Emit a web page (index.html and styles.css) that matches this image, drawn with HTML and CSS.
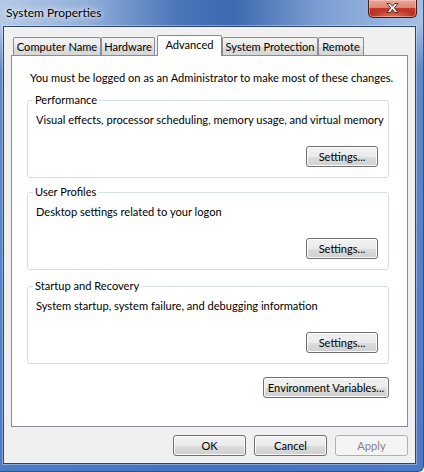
FILE: index.html
```html
<!DOCTYPE html>
<html lang="en">
<head>
<meta charset="utf-8">
<title>System Properties</title>
<link rel="stylesheet" href="styles.css">
</head>
<body>
<div class="window">
  <header class="titlebar">
    <span class="title">System Properties</span>
    <button class="close" aria-label="Close">
      <svg width="15" height="12" viewBox="0 0 15 12" aria-hidden="true">
        <polygon points="2,1.5 5.2,1.5 7.5,4.3 9.8,1.5 13,1.5 9.4,5.8 13,10.5 9.8,10.5 7.5,7.5 5.2,10.5 2,10.5 5.6,5.8" fill="#fff" stroke="#5a2a24" stroke-width="1" stroke-linejoin="round"/>
      </svg>
    </button>
  </header>
  <div class="client">
    <nav class="tabs">
      <span class="tab tab-cn">Computer Name</span>
      <span class="tab tab-hw">Hardware</span>
      <span class="tab tab-adv active">Advanced</span>
      <span class="tab tab-sp">System Protection</span>
      <span class="tab tab-rm">Remote</span>
    </nav>
    <section class="panel">
      <p class="note">You must be logged on as an Administrator to make most of these changes.</p>
      <fieldset class="group group-perf">
        <legend>Performance</legend>
        <p class="desc">Visual effects, processor scheduling, memory usage, and virtual memory</p>
        <div class="row"><button class="btn btn-settings">Settings...</button></div>
      </fieldset>
      <fieldset class="group group-prof">
        <legend>User Profiles</legend>
        <p class="desc">Desktop settings related to your logon</p>
        <div class="row"><button class="btn btn-settings">Settings...</button></div>
      </fieldset>
      <fieldset class="group group-boot">
        <legend>Startup and Recovery</legend>
        <p class="desc">System startup, system failure, and debugging information</p>
        <div class="row"><button class="btn btn-settings">Settings...</button></div>
      </fieldset>
      <div class="row env-row"><button class="btn btn-env">Environment Variables...</button></div>
    </section>
    <footer class="actions">
      <button class="btn btn-action">OK</button>
      <button class="btn btn-action">Cancel</button>
      <button class="btn btn-action" disabled>Apply</button>
    </footer>
  </div>
</div>
</body>
</html>
```
FILE: styles.css
```css
* { box-sizing: border-box; }

html, body {
  margin: 0;
  padding: 0;
}

body {
  width: 424px;
  height: 472px;
  overflow: hidden;
  font-family: Lato, "Liberation Sans", Arial, sans-serif;
  font-size: 11.1px;
  color: #000;
}

/* Aero glass frame */
.window {
  width: 424px;
  height: 472px;
  display: flex;
  flex-direction: column;
  padding: 0 7px 7px 3px;
  border-right: 1px solid #2f5488;
  border-bottom: 1px solid #2f5488;
  border-bottom-right-radius: 6px;
  background:
    linear-gradient(180deg, rgba(80, 126, 198, 0) 0, rgba(80, 126, 198, 0) 24px, rgba(76, 122, 196, 0.8) 70px, rgba(68, 114, 192, 0.9) 100%),
    linear-gradient(90deg, #b4c9e6 0%, #93b0da 20%, #4a76b9 42%, #3c69b0 55%, #7a9dd1 75%, #a6c0e4 100%);
}

.titlebar {
  height: 26px;
  display: flex;
  align-items: flex-start;
  padding-left: 3px;
}

.title {
  line-height: 26px;
  font-size: 12px;
  color: #000;
  text-shadow: 0 0 8px rgba(255, 255, 255, 0.95), 0 0 4px rgba(255, 255, 255, 0.9);
}

.close {
  margin-left: auto;
  margin-right: -1px;
  width: 49px;
  height: 18px;
  padding: 0;
  display: flex;
  align-items: center;
  justify-content: center;
  border: 1px solid #4a1a14;
  border-top: 0;
  border-radius: 0 0 5px 5px;
  background:
    radial-gradient(ellipse 70% 60% at 50% 100%, rgba(255, 140, 110, 0.75), rgba(255, 140, 110, 0) 70%),
    linear-gradient(180deg, #e8a89e 0%, #d98676 45%, #c1392a 50%, #b52a1c 100%);
  box-shadow: inset 0 0 0 1px rgba(255, 220, 210, 0.45);
}

.close svg { display: block; margin-top: -1px; }

.client {
  flex: 1;
  display: flex;
  flex-direction: column;
  border: 1px solid #2a4670;
  background: #f0f0f0;
  box-shadow: 0 0 0 1px rgba(255, 255, 255, 0.35);
}

/* Tab strip */
.tabs {
  margin-top: 8px;
  height: 20px;
  padding-left: 9px;
  display: flex;
  align-items: flex-end;
}

.tab {
  height: 18px;
  line-height: 17px;
  text-align: center;
  white-space: nowrap;
  border: 1px solid #898c95;
  border-bottom: 0;
  border-radius: 2px 2px 0 0;
  background: linear-gradient(180deg, #f2f2f2 0%, #ebebeb 50%, #dedede 51%, #d6d6d6 100%);
}

.tab-cn { width: 88px; }
.tab-hw { width: 54px; }
.tab-adv { width: 65px; }
.tab-sp { width: 96px; }
.tab-rm { width: 46px; }

.tab.active {
  position: relative;
  z-index: 1;
  height: 21px;
  margin-left: 2px;
  margin-bottom: -1px;
  background: #fff;
}

.panel {
  margin: 0 7px;
  height: 372px;
  border: 1px solid #898c95;
  background: #fff;
}

.note {
  margin: 0;
  padding: 14px 0 0 18px;
  line-height: 15px;
  white-space: nowrap;
}

/* Group boxes */
.group {
  width: 362px;
  margin: 0 0 0 15px;
  padding: 5px 10px 10px 8px;
  border: 1px solid #d5dfe5;
  border-radius: 3px;
  min-inline-size: 0;
}

.group-perf { margin-top: 8px; }
.group-prof { margin-top: 7px; }
.group-boot { margin-top: 9px; }

.group legend {
  padding: 0 2px;
  margin-left: -3px;
  line-height: 14px;
}

.desc {
  margin: 0;
  line-height: 15px;
  white-space: nowrap;
}

.row {
  display: flex;
  justify-content: flex-end;
}

.group .row { margin-top: 19px; }

.env-row {
  margin-top: 13px;
  padding-right: 18px;
}

/* Win7 push buttons */
.btn {
  height: 21px;
  padding: 0;
  font: inherit;
  line-height: 19px;
  white-space: nowrap;
  color: #000;
  border: 1px solid #707070;
  border-radius: 3px;
  background: linear-gradient(180deg, #f2f2f2 0%, #ebebeb 50%, #dddddd 51%, #cfcfcf 100%);
  box-shadow: inset 0 0 0 1px #fcfcfc;
}

.btn-settings { width: 72px; }
.btn-env { width: 126px; }
.btn-action { width: 73px; }

.btn:disabled {
  color: #838383;
  border-color: #adb2b5;
  background: #f4f4f4;
  box-shadow: none;
}

.actions {
  margin-top: 8px;
  display: flex;
  justify-content: flex-end;
  gap: 8px;
  padding-right: 7px;
}
```
